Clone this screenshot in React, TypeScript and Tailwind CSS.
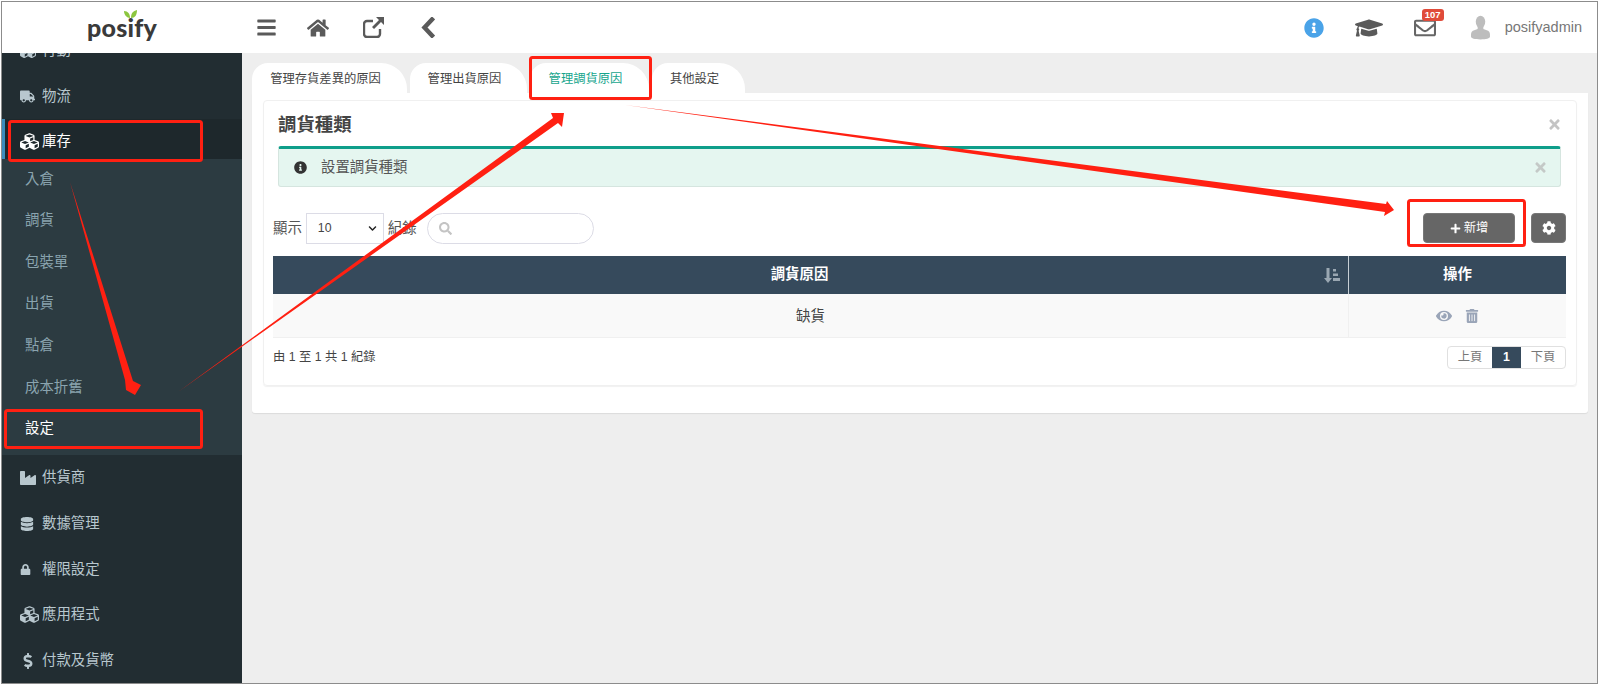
import React from 'react';
import {
  FaBars, FaHome, FaInfoCircle, FaGraduationCap, FaRegEnvelope, FaTruck, FaCubes,
  FaIndustry, FaDatabase, FaLock, FaDollarSign, FaTimes, FaSearch, FaChevronDown, FaPlus, FaCog,
  FaEye, FaTrashAlt,
} from 'react-icons/fa';

const subItems = ['入倉', '調貨', '包裝單', '出貨', '點倉', '成本折舊', '設定'];

const lowerItems = [
  { label: '供貨商', icon: <FaIndustry size={16} /> },
  { label: '數據管理', icon: <FaDatabase size={14} /> },
  { label: '權限設定', icon: <FaLock size={11} /> },
  { label: '應用程式', icon: <FaCubes size={19} /> },
  { label: '付款及貨幣', icon: <FaDollarSign size={16} /> },
];

const tabs = [
  { label: '管理存貨差異的原因', width: 'w-[155px]', active: false },
  { label: '管理出貨原因', width: 'w-[117px]', active: false },
  { label: '管理調貨原因', width: 'w-[119px]', active: true },
  { label: '其他設定', width: 'w-[93px]', active: false },
];

const MenuItem = ({ icon, label }: { icon: React.ReactNode; label: string }) => (
  <div className="flex h-[45.6px] items-center pl-[18px] text-[14.4px] text-[#b8c7ce]">
    <span className="flex w-[22px] shrink-0 items-center">{icon}</span>
    {label}
  </div>
);

const Sidebar = () => (
  <aside className="w-[240px] shrink-0 overflow-hidden bg-[#222d32]">
    <div className="-mt-[25px]">
      <MenuItem icon={<FaCubes size={16} />} label="行動" />
      <MenuItem icon={<FaTruck size={15} />} label="物流" />

      {/* open section */}
      <div className="flex h-[45px] items-center border-l-[3px] border-[#3c8dbc] bg-[#1e282c] pl-[15px] text-[14.4px] text-white">
        <span className="flex w-[22px] shrink-0 items-center">
          <FaCubes size={19} />
        </span>
        庫存
      </div>
      <div className="bg-[#2c3b41] pb-[5.5px]">
        <div className="-mt-[5.5px]">
          {subItems.map((item) => (
            <div
              key={item}
              className={`flex h-[41.6px] items-center pl-[23px] text-[14.4px] ${item === '設定' ? 'text-white' : 'text-[#8aa4af]'}`}
            >
              {item}
            </div>
          ))}
        </div>
      </div>

      {lowerItems.map((item) => (
        <MenuItem key={item.label} icon={item.icon} label={item.label} />
      ))}
    </div>
  </aside>
);

const TopBar = () => (
  <header className="flex h-[51px] shrink-0 items-center bg-white">
    <div className="flex w-[240px] shrink-0 justify-center">
      <div className="relative font-['Lato','Liberation_Sans',sans-serif] text-[25px] font-black leading-none tracking-[0.2px] text-[#3a3a3a]">
        posify
        <svg className="absolute left-[37px] -top-[5px]" width="13" height="8" viewBox="0 0 13 8">
          <path d="M6 8C3 8 0 5 0 1c4 0 6 3 6 7zM7 8c0-5 2-7 6-8 0 5-2 8-6 8z" fill="#8cc63f" />
        </svg>
      </div>
    </div>

    <div className="flex items-center text-[#5a5a5a]">
      <FaBars size={21} className="ml-[14px]" />
      <FaHome size={22} className="ml-[30px]" />
      <svg className="ml-[34px]" width="22" height="21" viewBox="0 0 22 21">
        <path d="M10 4H4a3 3 0 0 0-3 3v10a3 3 0 0 0 3 3h10a3 3 0 0 0 3-3v-5" fill="none" stroke="currentColor" strokeWidth="2.4" />
        <path d="M21 0v8l-3-3-7 7-2-2 7-7-3-3z" fill="currentColor" />
      </svg>
      <svg className="ml-[36px]" width="14" height="21" viewBox="0 0 14 21">
        <path d="M11 2.5L3.5 10.5L11 18.5" fill="none" stroke="currentColor" strokeWidth="4.5" strokeLinecap="square" />
      </svg>
    </div>

    <div className="ml-auto flex items-center pr-[15px]">
      <FaInfoCircle size={20} className="text-[#4aa3e8]" />
      <FaGraduationCap size={28} className="ml-[31px] text-[#5a5a5a]" />
      <div className="relative ml-[31px] text-[#666]">
        <FaRegEnvelope size={22} />
        <span className="absolute -right-[8px] -top-[8px] rounded-[3px] bg-[#e04b3a] px-[3px] text-[9.5px] font-bold leading-[12px] text-white">
          107
        </span>
      </div>
      <svg className="ml-[35px]" width="19" height="25" viewBox="0 0 20 25">
        <ellipse cx="10" cy="6.5" rx="5" ry="6.5" fill="#bdbdbd" />
        <path d="M7 12h6v2l5 2c2 1 2 3 2 6 0 2-4 3-10 3S0 24 0 22c0-3 0-5 2-6l5-2z" fill="#bdbdbd" />
      </svg>
      <span className="ml-[15px] text-[14.5px] text-[#777]">posifyadmin</span>
    </div>
  </header>
);

const Content = () => (
  <main className="min-w-0 flex-1 bg-[#eeeeee] pl-[10px] pr-[9px] pt-[10px]">
    <div className="flex gap-[3px]">
      {tabs.map((tab) => (
        <div
          key={tab.label}
          className={`flex h-[30px] items-center justify-center rounded-tl-[16px] rounded-tr-[26px] bg-white pr-[8px] pt-[2px] text-[12.3px] ${tab.width} ${tab.active ? 'text-[#16a58d]' : 'text-[#444]'}`}
        >
          {tab.label}
        </div>
      ))}
    </div>

    <div className="rounded-b-[3px] bg-white px-[11px] pb-[27px] pt-[7px] shadow-[0_1px_1px_rgba(0,0,0,0.08)]">
      <div className="rounded-[4px] border border-[#f0f0f0] pb-[16px] pl-[9px] pr-[10px] shadow-[0_1px_1px_rgba(0,0,0,0.06)]">
        <div className="flex h-[45px] items-center justify-between pl-[5px] pr-[4px] pt-[2px]">
          <h2 className="text-[18.4px] font-bold text-[#444]">調貨種類</h2>
          <FaTimes size={15} className="text-[#c4c4c4]" />
        </div>

        <div className="mx-[5px] flex h-[41px] items-center justify-between rounded-[3px] border border-[#d5e5df] border-t-[3px] border-t-[#0e9e8a] bg-[#e5f6f0] pl-[15px] pr-[12px]">
          <div className="flex items-center text-[14.4px] text-[#555]">
            <FaInfoCircle size={13} className="mr-[14px] text-[#333]" />
            設置調貨種類
          </div>
          <FaTimes size={15} className="text-[#c4c9c7]" />
        </div>

        <div className="mt-[26px] flex h-[31px] items-start">
          <span className="self-center text-[14.4px] text-[#555]">顯示</span>
          <div className="ml-[4px] flex h-[31px] w-[78px] items-center justify-between border border-[#dcdce6] pl-[11px] pr-[6px] text-[12.3px] text-[#444]">
            10
            <FaChevronDown size={9} className="text-[#222]" />
          </div>
          <span className="ml-[4px] self-center text-[14.4px] text-[#555]">紀錄</span>
          <div className="ml-[10px] flex h-[31px] w-[167px] items-center rounded-full border border-[#dcdce6] pl-[11px]">
            <FaSearch size={13} className="text-[#c4c4c4]" />
          </div>
          <button className="ml-auto flex h-[30px] w-[92px] items-center justify-center gap-[3px] rounded-[4px] border border-[#777] bg-[#666] text-[12.3px] text-white">
            <FaPlus size={11} />
            新增
          </button>
          <button className="ml-[16px] flex h-[30px] w-[35px] items-center justify-center rounded-[4px] border border-[#777] bg-[#666] text-white">
            <FaCog size={14} />
          </button>
        </div>

        <div className="mt-[12px]">
          <div className="flex h-[38px] items-center bg-[#364a5c] text-[14.4px] font-bold text-white">
            <div className="relative flex h-full flex-1 items-center justify-center border-r border-[#c8d0d6] pr-[22px]">
              調貨原因
              <svg className="absolute right-[8px]" width="16" height="15" viewBox="0 0 16 15" fill="#9aa7b2">
                <path d="M2.5 0h3v10h2.5l-4 5-4-5h2.5z" />
                <rect x="9" y="1" width="3" height="2.5" />
                <rect x="9" y="5.5" width="5" height="2.5" />
                <rect x="9" y="10" width="7" height="3" />
              </svg>
            </div>
            <div className="flex h-full w-[217px] items-center justify-center">操作</div>
          </div>
          <div className="flex h-[44px] items-center border-b border-[#f0f0f0] bg-[#f9f9f9] text-[14.4px] text-[#444]">
            <div className="flex h-full flex-1 items-center justify-center border-r border-[#f0f0f0] pt-[2px]">缺貨</div>
            <div className="flex w-[217px] items-center justify-center gap-[13px] text-[#9aa5b8]">
              <FaEye size={16} />
              <FaTrashAlt size={14} />
            </div>
          </div>
        </div>

        <div className="mt-[8px] flex h-[23px] items-center justify-between">
          <span className="text-[12.3px] text-[#444]">由 1 至 1 共 1 紀錄</span>
          <div className="flex h-[23px] overflow-hidden rounded-[4px] border border-[#e0e0e0] text-[12.3px] text-[#777]">
            <span className="flex w-[44px] items-center justify-center">上頁</span>
            <span className="flex w-[29px] items-center justify-center bg-[#364a5c] font-bold text-white">1</span>
            <span className="flex w-[44px] items-center justify-center">下頁</span>
          </div>
        </div>
      </div>
    </div>
  </main>
);

// red markup drawn over the screenshot
const Annotations = () => (
  <svg className="pointer-events-none absolute left-0 top-0" width="1600" height="685" viewBox="0 0 1600 685">
    <g fill="none" stroke="#ff2012" strokeWidth="3">
      <rect x="9.5" y="121.5" width="192" height="39" rx="2" />
      <rect x="5.5" y="410.5" width="196" height="37" rx="2" />
      <rect x="530.5" y="57.5" width="120" height="41" rx="2" />
      <rect x="1408.5" y="200.5" width="116" height="45" rx="2" />
    </g>
    <g fill="#ff2012">
      <polygon points="70,182 133,381 141,385 135,395 126,390 125,380" />
      <polygon points="178,392 553,118 551,113 564,113 562,127 558,123" />
      <polygon points="625,105 1386,204 1387,201 1394,210 1384,216 1385,212" />
    </g>
  </svg>
);

const App = () => (
  <div className="relative h-[685px] w-[1600px] overflow-hidden bg-white font-['Liberation_Sans','Noto_Sans_CJK_TC',sans-serif]">
    <div className="ml-[1px] mt-[1px] flex h-[683px] w-[1597px] flex-col border border-[#8c8c8c]">
      <TopBar />
      <div className="flex min-h-0 flex-1">
        <Sidebar />
        <Content />
      </div>
    </div>
    <Annotations />
  </div>
);

export default App;
